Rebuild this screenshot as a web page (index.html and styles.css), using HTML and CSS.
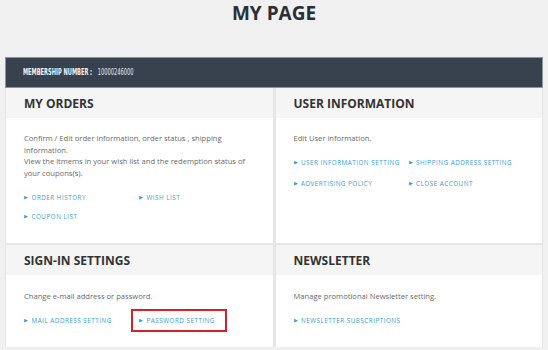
FILE: index.html
```html
<!DOCTYPE html>
<html lang="en">
<head>
    <meta charset="UTF-8">
    <title>My Page</title>
    <link rel="stylesheet" href="styles.css">
</head>
<body>
    <h1 class="page-title">MY PAGE</h1>

    <div class="mypage">
        <div class="member-bar">
            <span class="member-info">
                <span class="member-label">MEMBERSHIP NUMBER :</span>
                <span class="member-number">10000246000</span>
            </span>
        </div>

        <div class="panel-grid">
            <section class="panel">
                <h2 class="panel-head">MY ORDERS</h2>
                <div class="panel-body">
                    <p class="panel-text">Confirm / Edit order information, order status , shipping information.<br>View the itmems in your wish list and the redemption status of your coupons(s).</p>
                    <ul class="link-list">
                        <li><a href="#">ORDER HISTORY</a></li>
                        <li><a href="#">WISH LIST</a></li>
                        <li><a href="#">COUPON LIST</a></li>
                    </ul>
                </div>
            </section>

            <section class="panel">
                <h2 class="panel-head">USER INFORMATION</h2>
                <div class="panel-body">
                    <p class="panel-text">Edit User information.</p>
                    <ul class="link-list link-list-wide">
                        <li><a href="#">USER INFORMATION SETTING</a></li>
                        <li><a href="#">SHIPPING ADDRESS SETTING</a></li>
                        <li><a href="#">ADVERTISING POLICY</a></li>
                        <li><a href="#">CLOSE ACCOUNT</a></li>
                    </ul>
                </div>
            </section>

            <section class="panel">
                <h2 class="panel-head">SIGN-IN SETTINGS</h2>
                <div class="panel-body panel-body-low">
                    <p class="panel-text">Change e-mail address or password.</p>
                    <ul class="link-list">
                        <li><a href="#">MAIL ADDRESS SETTING</a></li>
                        <li><a href="#" class="is-marked">PASSWORD SETTING</a></li>
                    </ul>
                </div>
            </section>

            <section class="panel">
                <h2 class="panel-head">NEWSLETTER</h2>
                <div class="panel-body panel-body-low">
                    <p class="panel-text">Manage promotional Newsletter setting.</p>
                    <ul class="link-list">
                        <li><a href="#">NEWSLETTER SUBSCRIPTIONS</a></li>
                    </ul>
                </div>
            </section>
        </div>
    </div>
</body>
</html>
```

FILE: styles.css
```css
:root {
    --bg: #f0f0f0;
    --bar: #37424e;
    --head-bg: #f5f5f5;
    --line: #e6e6e6;
    --title: #2a2e35;
    --text: #6a6a6a;
    --link: #3b9ed6;
    --mark: #d7202c;
}

*, *::before, *::after {
    box-sizing: border-box;
    margin: 0;
    padding: 0;
}

body {
    font-family: 'Open Sans', sans-serif;
    background: var(--bg);
    color: var(--text);
    width: 548px;
    height: 350px;
    overflow: hidden;
}

.page-title {
    height: 57px;
    line-height: 26px;
    text-align: center;
    font-size: 19px;
    font-weight: 700;
    color: var(--title);
}

.mypage {
    margin: 0 5px;
}

/* Membership bar */
.member-bar {
    height: 31px;
    background: var(--bar);
    border: 1px solid #8d959d;
    display: flex;
    align-items: center;
    padding-left: 17px;
    color: #e9ecef;
    font-family: 'DejaVu Sans', sans-serif;
    font-size: 8px;
}
.member-info {
    display: inline-block;
    white-space: nowrap;
    transform: scaleX(0.64);
    transform-origin: left center;
}
.member-label {
    font-weight: 700;
    color: #f4f5f6;
    margin-right: 6px;
}

/* Panels */
.panel-grid {
    display: grid;
    grid-template-columns: 1fr 1fr;
    grid-template-rows: 155px 102px;
    gap: 2px 3px;
    background: var(--line);
    border-left: 1px solid var(--line);
    border-right: 1px solid var(--line);
}
.panel {
    background: #fff;
    display: flex;
    flex-direction: column;
}
.panel-head {
    flex-shrink: 0;
    height: 30px;
    background: var(--head-bg);
    padding-left: 18px;
    display: flex;
    align-items: center;
    font-size: 12px;
    font-weight: 700;
    color: #333;
}
.panel-body {
    padding: 15px 18px 0;
}
.panel-body-low {
    padding-top: 16px;
}
.panel-text {
    font-size: 7.6px;
    line-height: 11.7px;
    color: var(--text);
}

.link-list {
    list-style: none;
    display: grid;
    grid-template-columns: 115px auto;
    row-gap: 8px;
    margin-top: 12px;
    font-size: 6.3px;
    line-height: 11px;
}
.link-list-wide {
    row-gap: 10px;
}
.link-list a {
    position: relative;
    display: inline-block;
    letter-spacing: 0.5px;
    color: var(--link);
    text-decoration: none;
}
.link-list a::before {
    content: "\25B6";
    font-size: 4.5px;
    margin-right: 3px;
    vertical-align: 1px;
}
.link-list a.is-marked::after {
    content: "";
    position: absolute;
    left: -8px;
    right: -12px;
    top: -6px;
    bottom: -6px;
    border: 2px solid var(--mark);
}
```
